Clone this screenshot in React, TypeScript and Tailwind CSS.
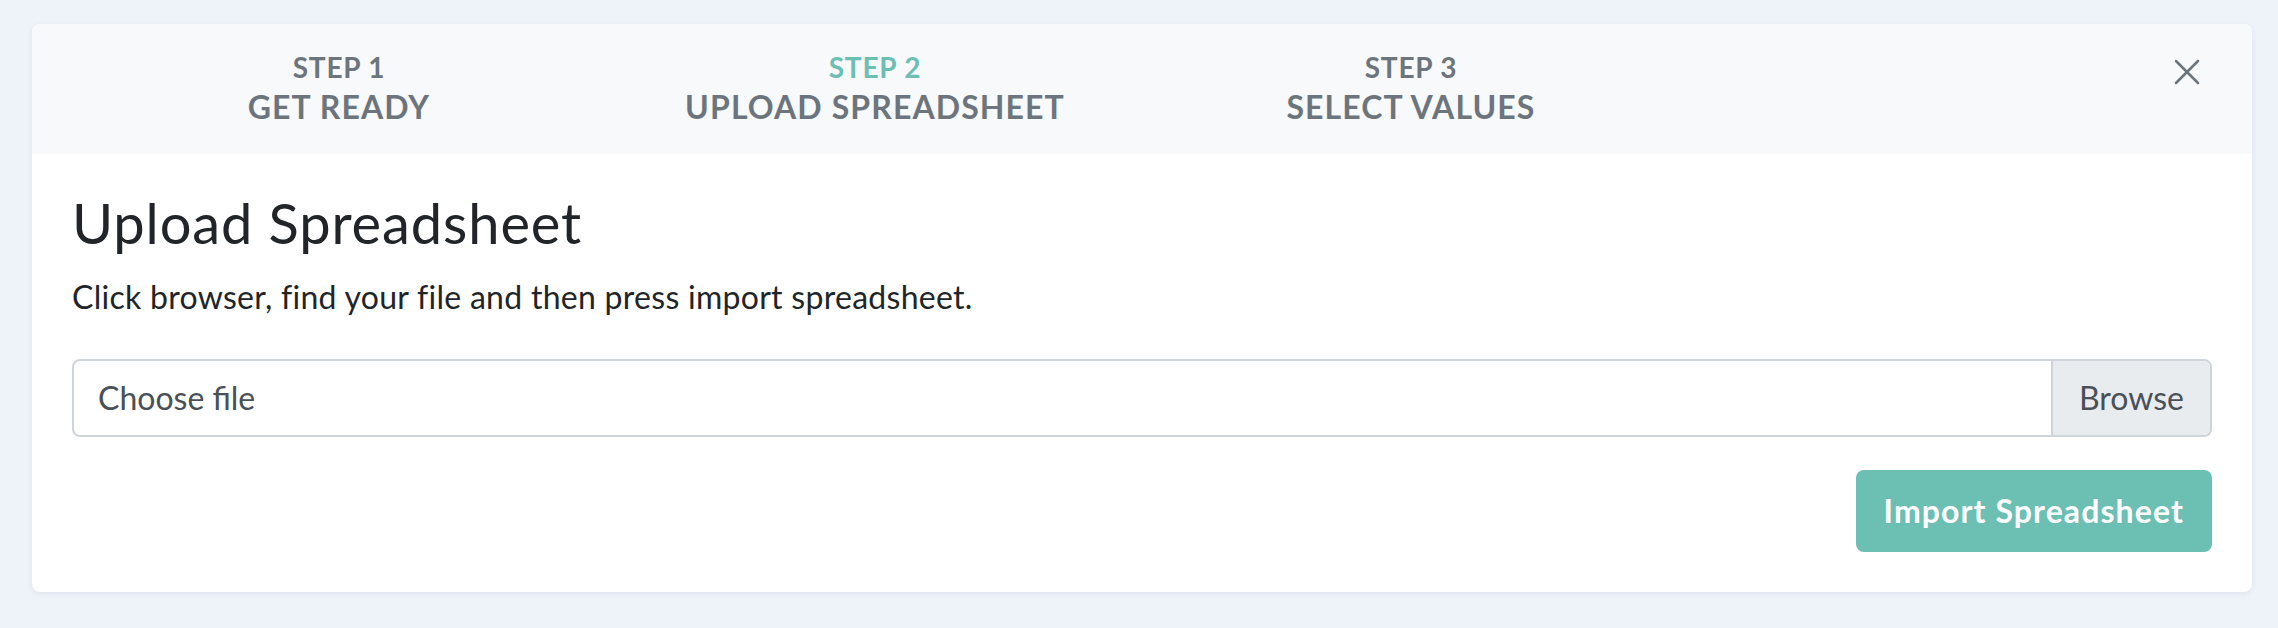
import React from "react";

const steps = [
  { label: "STEP 1", title: "GET READY", active: false },
  { label: "STEP 2", title: "UPLOAD SPREADSHEET", active: true },
  { label: "STEP 3", title: "SELECT VALUES", active: false },
];

export default function App() {
  return (
    <div className="min-h-screen bg-[#eef2f9] pt-[24px] pl-[32px] pr-[26px] font-['Lato','Noto_Sans',sans-serif]">
      <div className="bg-white rounded-[8px] overflow-hidden shadow-[0_2px_6px_rgba(30,40,70,0.07)]">
        {/* Wizard steps */}
        <div className="flex items-start bg-[#f8f9fb] pt-[23px] pb-[27px] pl-[39px] pr-[52px]">
          {steps.map((s) => (
            <div key={s.label} className="w-[536px] text-center font-bold">
              <div className={`text-[28px] leading-[40px] tracking-[0.8px] ${s.active ? "text-[#6cbfb3]" : "text-[#6c757d]"}`}>
                {s.label}
              </div>
              <div className="text-[32px] leading-[40px] tracking-[1.1px] text-[#6c757d]">{s.title}</div>
            </div>
          ))}
          <div className="flex-1" />
          <button className="mt-[12px] text-[#6c757d]">
            <svg width="26" height="26" viewBox="0 0 26 26" fill="none" stroke="currentColor" strokeWidth="2.5" strokeLinecap="round">
              <path d="M2 2 L24 24" />
              <path d="M24 2 L2 24" />
            </svg>
          </button>
        </div>

        {/* Body */}
        <div className="px-[40px] pt-[35px] pb-[40px]">
          <h3 className="text-[56px] leading-[1.2] tracking-[0.9px] text-[#212529]">Upload Spreadsheet</h3>
          <p className="mt-[17px] text-[32px] leading-[48px] tracking-[0.28px] text-[#212529]">
            Click browser, find your file and then press import spreadsheet.
          </p>

          <div className="mt-[38px] flex h-[78px] border-2 border-[#ced4da] rounded-[8px] overflow-hidden text-[32px] text-[#495057]">
            <div className="flex-1 flex items-center pl-[24px]">Choose file</div>
            <div className="w-[159px] flex items-center justify-center bg-[#e9ecef] border-l-2 border-[#ced4da]">
              Browse
            </div>
          </div>

          <div className="mt-[33px] flex justify-end">
            <button className="h-[82px] px-[28px] rounded-[8px] bg-[#6cbfb3] text-white text-[32px] font-bold tracking-[1.1px]">
              Import Spreadsheet
            </button>
          </div>
        </div>
      </div>
    </div>
  );
}
